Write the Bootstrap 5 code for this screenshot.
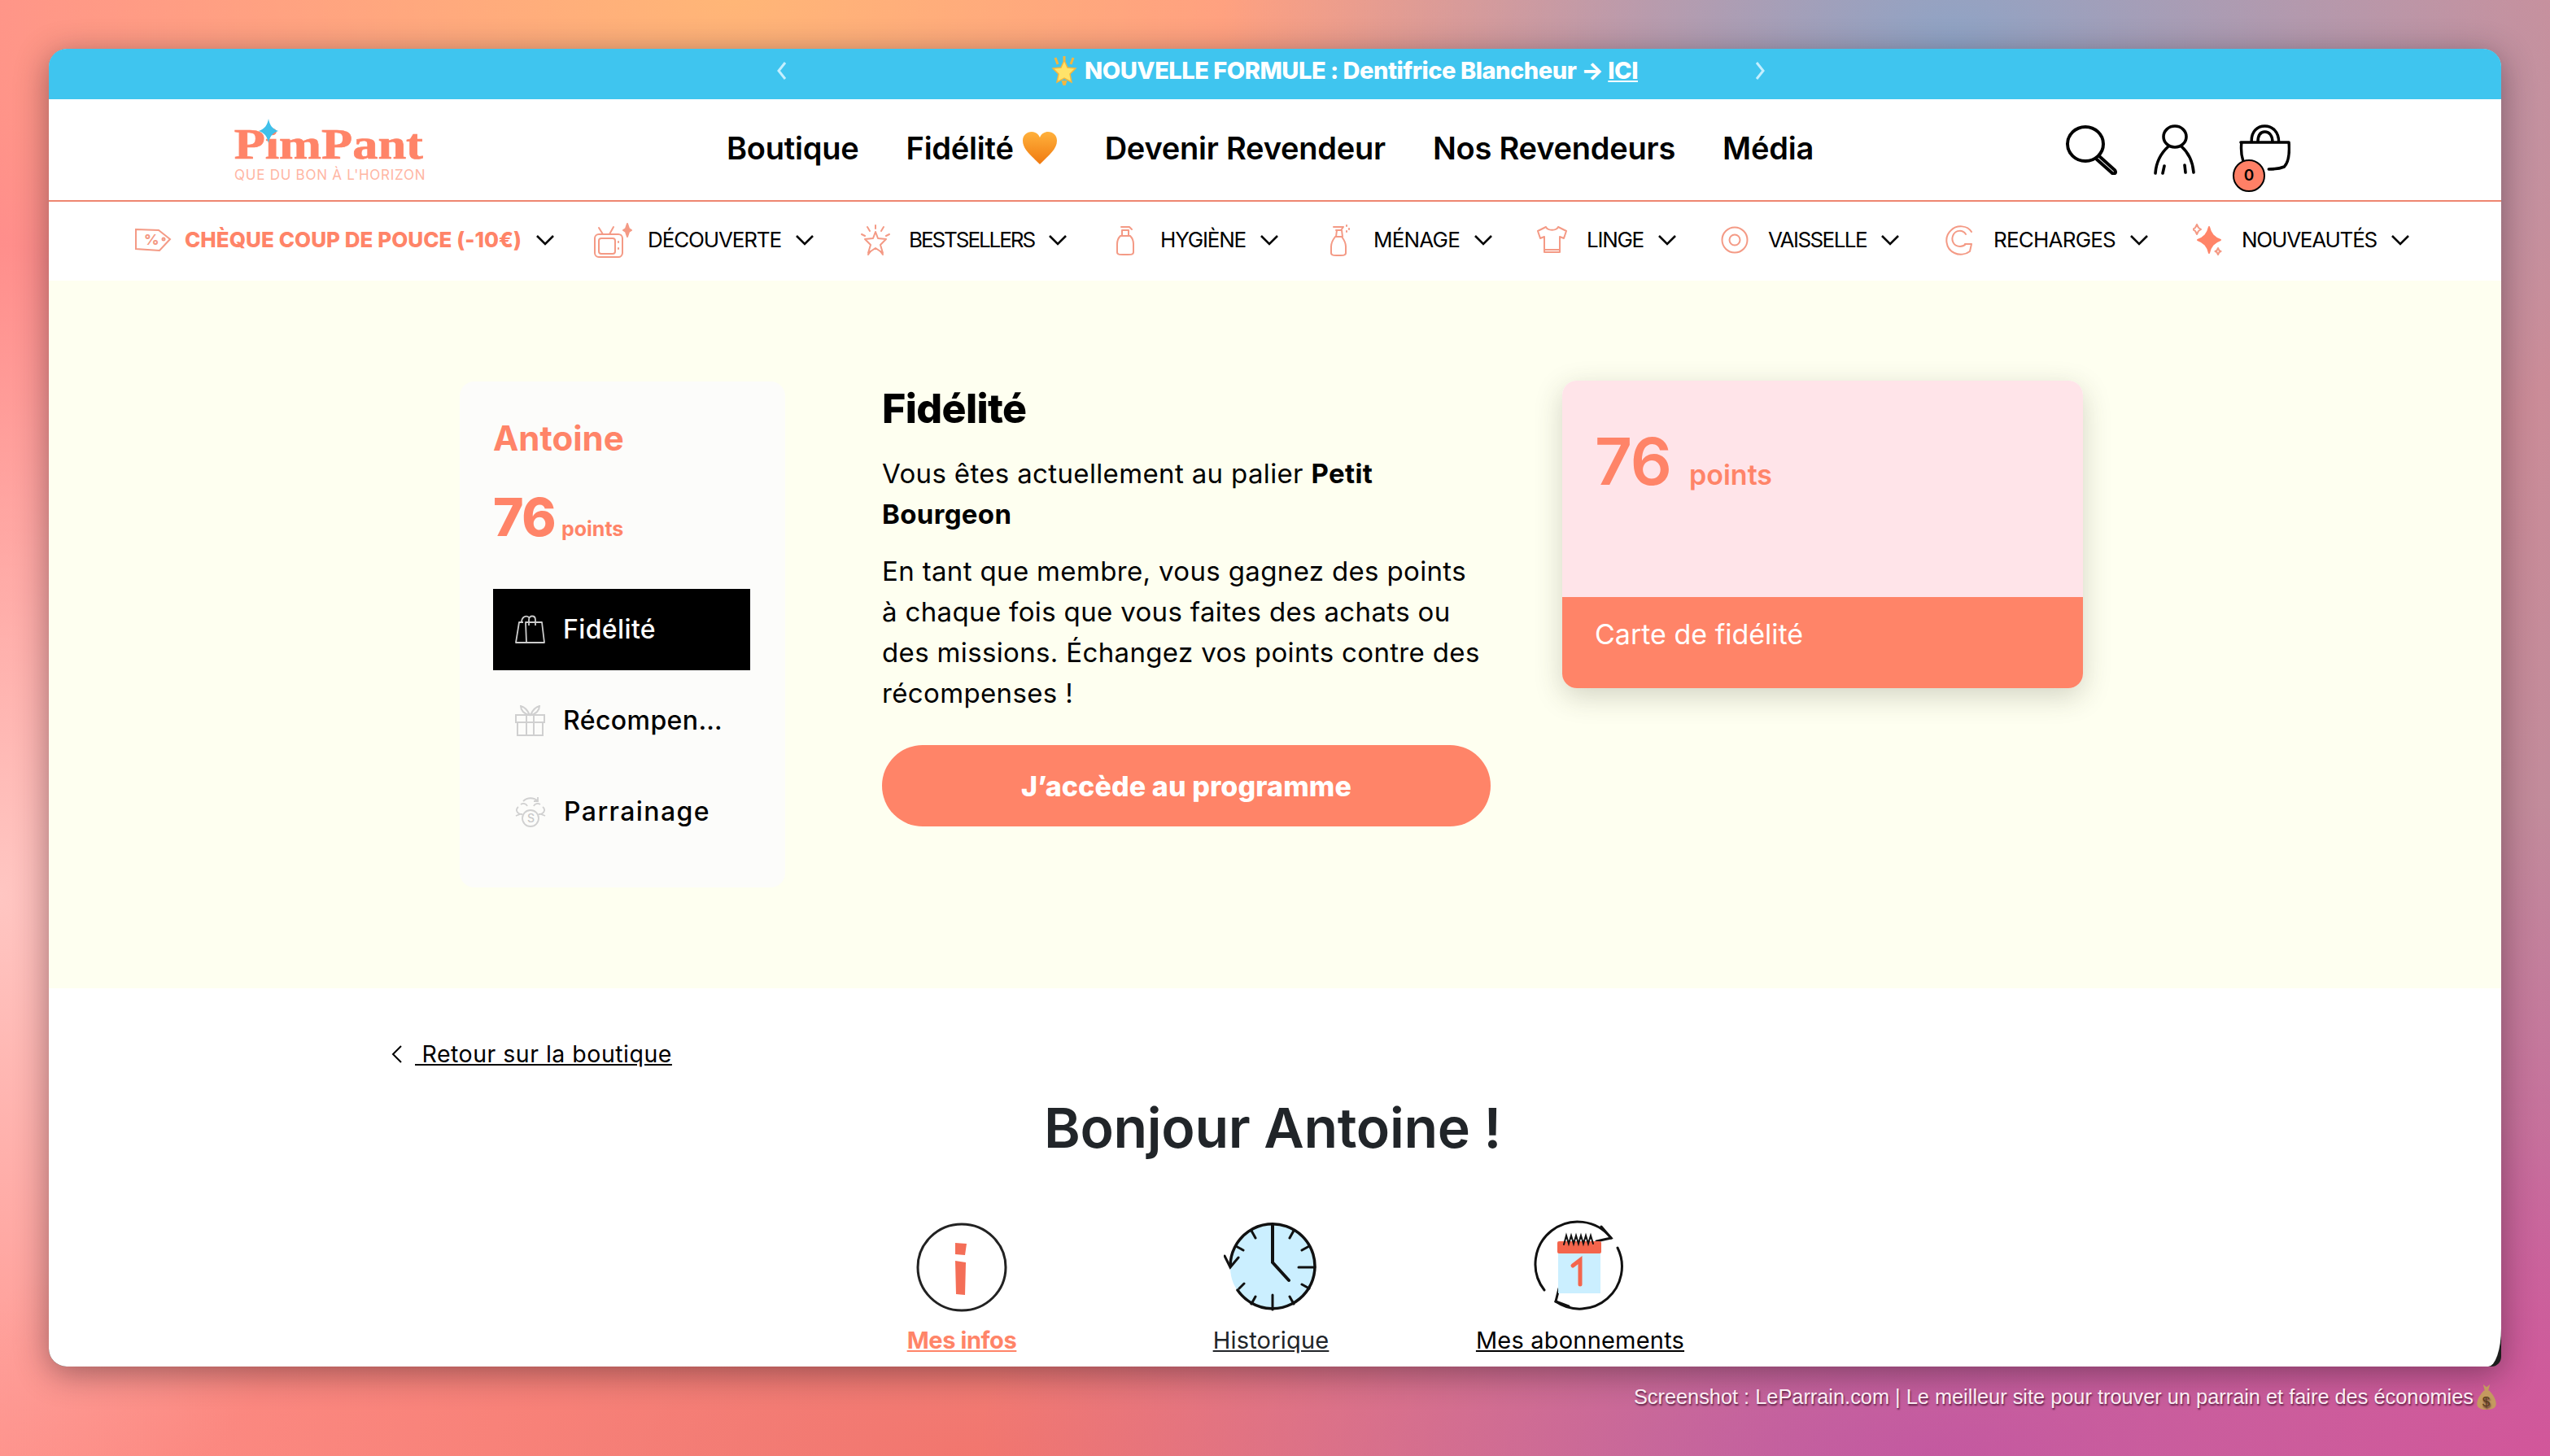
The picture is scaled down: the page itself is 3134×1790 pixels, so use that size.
<!DOCTYPE html>
<html lang="fr">
<head>
  <title>Pimpant - Fidélité</title>
  <meta charset="UTF-8">
  <link href="https://cdn.jsdelivr.net/npm/bootstrap@5.3.0/dist/css/bootstrap.min.css" rel="stylesheet">
  <script src="https://cdn.jsdelivr.net/npm/bootstrap@5.3.0/dist/js/bootstrap.bundle.min.js"></script>
  <style>
    html, body { height: 1790px; overflow: hidden; }
    body {
      font-family: Inter, "Noto Sans", sans-serif;
      color: #000;
      padding: 60px 58px 0 60px;
      background:
        radial-gradient(900px 700px at 2400px 60px, #8ea4c6 0%, rgba(142,164,198,0) 100%),
        radial-gradient(1100px 800px at 3134px 1790px, #d2569a 0%, rgba(210,86,154,0) 100%),
        radial-gradient(1200px 500px at 2400px 1790px, #bd5aa3 0%, rgba(189,90,163,0) 100%),
        radial-gradient(1300px 500px at 1200px 1790px, #f2766e 0%, rgba(242,118,110,0) 100%),
        radial-gradient(500px 800px at 0 1100px, #ffc6c2 0%, rgba(255,198,194,0) 100%),
        radial-gradient(1100px 500px at 900px 0, #ffb677 0%, rgba(255,182,119,0) 100%),
        linear-gradient(120deg, #ff8e8c 0%, #ff9086 40%, #b48aa0 100%);
    }
    .app-window {
      width: 3014px; height: 1620px; background: #1c1c1c;
      border-radius: 22px 22px 12px 22px; overflow: hidden;
      box-shadow: 0 8px 40px rgba(40,20,30,.45);
    }
    .app-pane { height: 100%; background: #fff; border-bottom-right-radius: 16px 47px; overflow: hidden; }
    .promo-bar { height: 62px; background: #3fc5ef; color: #fff; padding: 0 10px 8px 0; }
    .promo-text { width: 1188px; padding-left: 180px; font-size: 29px; font-weight: 800; }
    .promo-text a { color: #fff; }
    .main-head { height: 126px; border-bottom: 2px solid #ee8670; padding-left: 228px; padding-bottom: 4px; }
    .logo-box { width: 232px; margin-right: 373px; margin-top: 19px; position: relative; text-align: center; }
    .logo-name { font-family: "Liberation Serif", serif; font-weight: 700; font-size: 52px; line-height: 40px; color: #ff8468; white-space: nowrap; -webkit-text-stroke: .7px #ff8468; }
    .logo-name span { transform: scaleX(1.2); }
    .logo-tag { font-size: 17px; line-height: 20px; color: #ffb6a4; letter-spacing: .75px; white-space: nowrap; margin-top: 7px; }
    .logo-star { position: absolute; left: 30px; top: -12px; }
    .main-links { gap: 58px; width: 1645px; }
    .main-links .nav-link { padding: 0; color: #000; font-size: 38px; font-weight: 600; letter-spacing: -.22px; }
    .heart-link { gap: 10px; }
    .head-icons { gap: 42px; padding-top: 4px; }
    .cart-wrap { position: relative; margin-left: 10px; }
    .cart-count {
      position: absolute; left: -8px; top: 43px; width: 40px; height: 40px; border-radius: 50%;
      background: #ff8066; border: 2px solid #000; font-size: 19px; font-weight: 600;
      display: flex; align-items: center; justify-content: center;
    }
    .sub-nav { height: 97px; padding: 0 0 4px 105px; font-size: 26px; }
    .sub-item { white-space: nowrap; color: #000; text-decoration: none; }
    .sub-promo { color: #ff8468; font-weight: 800; }
    .hero { height: 870px; background: #fefff0; padding: 124px 0 0 505px; }
    .side-panel { width: 400px; height: 622px; background: #fcfcfa; border-radius: 18px; padding: 41px; }
    .side-name { font-size: 42px; font-weight: 700; color: #ff8468; line-height: 58px; margin-bottom: 32px; }
    .side-points { font-size: 64px; font-weight: 800; color: #ff8468; line-height: 72px; margin-bottom: 38px; letter-spacing: -1.5px; gap: 8px; }
    .side-points span { font-size: 25px; font-weight: 700; letter-spacing: 0; }
    .side-menu { width: 316px; gap: 12px; }
    .side-menu .list-group-item {
      height: 100px; border: 0; border-radius: 0; background: transparent; color: #000;
      font-size: 32px; font-weight: 500; padding: 0 0 0 27px; gap: 22px;
    }
    .side-menu .list-group-item.active { background: #000; color: #fff; }
    .intro-col { width: 748px; margin: -3px 88px 0 119px; }
    .intro-col h2 { font-size: 50px; font-weight: 800; line-height: 72px; margin-bottom: 19px; letter-spacing: -.6px; }
    .intro-col p { font-size: 33px; line-height: 50px; margin-bottom: 20px; letter-spacing: .35px; white-space: nowrap; }
    .btn-program {
      background: #ff8468; color: #fff; height: 100px; margin-top: 39px; font-size: 34px; font-weight: 800; letter-spacing: .1px;
      border: 0;
    }
    .points-card {
      width: 640px; height: 378px; border: 0; border-radius: 18px; overflow: hidden;
      box-shadow: 0 10px 34px rgba(60,60,40,.22); margin-top: -1px;
    }
    .points-card .card-body { background: #ffe4e9; color: #ff8468; padding: 54px 40px 0; height: 266px; flex: none; }
    .points-big { font-size: 80px; font-weight: 600; line-height: 90px; letter-spacing: -1px; gap: 22px; }
    .points-big span { font-size: 34px; letter-spacing: 0; }
    .points-card .card-footer { background: #ff8468; color: #fff; border: 0; border-radius: 0; height: 112px; padding: 0 40px 22px; font-size: 34px; }
    .back-link { padding: 68px 0 0 420px; height: 94px; font-size: 28.5px; line-height: 34px; letter-spacing: .5px; }
    .back-link a { color: #000; margin-left: 14px; }
    .hello { font-size: 68px; font-weight: 600; color: #212529; text-align: center; line-height: 80px; margin: 37px 0 74px; padding-right: 6px; letter-spacing: -.3px; }
    .tile-row { width: 1140px; margin-left: 932px; }
    .tile { width: 380px; text-align: center; font-size: 29px; line-height: 36px; letter-spacing: .2px; }
    .tile svg { display: block; margin: 0 auto 14px; }
    .tile a { color: #000; }
    .tile a.muted-link { color: #212529; }
    .tile a.current { color: #ff8468; font-weight: 700; letter-spacing: -.4px; }
    .credit {
      margin-top: 21px; padding-right: 8px; font-family: "Liberation Sans", Arial, sans-serif; font-size: 25.35px;
      color: #fbeef4; text-shadow: 1px 2px 2px rgba(60,10,40,.75); line-height: 28px;
    }
  </style>
</head>
<body>

<div class="app-window">
 <div class="app-pane d-flex flex-column">

  <div class="promo-bar d-flex align-items-center justify-content-center">
    <svg width="14" height="24" viewBox="0 0 14 24"><path d="M11 2 3 12l8 10" fill="none" stroke="#c4efff" stroke-width="3"/></svg>
    <div class="promo-text d-flex align-items-center justify-content-center gap-2">
      <svg width="34" height="36" viewBox="0 0 34 36">
        <path d="M6 2l3 8M28 2l-3 8M17 0v6M15 30l2 6 2-6" stroke="#f3b640" stroke-width="3" fill="none"/>
        <path d="M17 5l4 9 10 1-7 7 2 10-9-5-9 5 2-10-7-7 10-1z" fill="#ffe36a" stroke="#f4b63f" stroke-width="1.5"/>
      </svg>
      <span data-fit="680">NOUVELLE FORMULE : Dentifrice Blancheur → <a href="#">ICI</a></span>
    </div>
    <svg width="14" height="24" viewBox="0 0 14 24"><path d="M3 2l8 10-8 10" fill="none" stroke="#c4efff" stroke-width="3"/></svg>
  </div>

  <header class="main-head d-flex align-items-center">
    <div class="logo-box">
      <div class="logo-name"><span class="d-inline-block">PimPant</span></div>
      <svg class="logo-star" width="24" height="30" viewBox="0 0 30 36" preserveAspectRatio="none"><path d="M15 0c2 10 6 15 15 18-9 3-13 8-15 18-2-10-6-15-15-18 9-3 13-8 15-18z" fill="#3fc0ea"/></svg>
      <div class="logo-tag">QUE DU BON À L'HORIZON</div>
    </div>
    <nav class="nav main-links">
      <a class="nav-link" href="#">Boutique</a>
      <a class="nav-link heart-link d-flex align-items-center" href="#">Fidélité
        <svg width="44" height="42" viewBox="0 0 44 42"><defs><linearGradient id="heartFill" x1="0" y1="0" x2="0" y2="1"><stop offset="0" stop-color="#ffb13c"/><stop offset="1" stop-color="#f07a10"/></linearGradient></defs><path d="M22 41C10 29 1 22 1 12 1 5 6 1 12 1c4 0 8 2 10 7 2-5 6-7 10-7 6 0 11 4 11 11 0 10-9 17-21 29z" fill="url(#heartFill)"/></svg>
      </a>
      <a class="nav-link" href="#">Devenir Revendeur</a>
      <a class="nav-link" href="#">Nos Revendeurs</a>
      <a class="nav-link" href="#">Média</a>
    </nav>
    <div class="head-icons d-flex align-items-center">
      <svg width="66" height="62" viewBox="0 0 66 62" fill="none" stroke="#000" stroke-width="4" stroke-linecap="round"><ellipse cx="25" cy="24" rx="22" ry="21"/><path d="M42 39l19 17c3 4-1 6-4 3L39 43"/></svg>
      <svg width="54" height="62" viewBox="0 0 54 62" fill="none" stroke="#000" stroke-width="3.6" stroke-linecap="round"><ellipse cx="27" cy="15" rx="14" ry="13"/><path d="M19 27C9 36 4 46 3 60M35 27c9 8 14 20 15 32M12 60l2-9M40 59l-1-9"/></svg>
      <div class="cart-wrap">
        <svg width="63" height="62" viewBox="0 0 66 62" preserveAspectRatio="none" fill="none" stroke="#000" stroke-width="3.6" stroke-linecap="round"><path d="M2 22h62M3 22c-1 10 0 24 8 32M64 22c1 12 0 24-6 30-5 2-12 3-20 3M16 22C15 8 24 2 33 2s18 6 18 20M24 22c0-8 3-13 9-13s10 5 10 13"/></svg>
        <div class="cart-count">0</div>
      </div>
    </div>
  </header>

  <nav class="sub-nav d-flex align-items-center" id="subNav">
    <a class="sub-item sub-promo d-flex align-items-center" href="#">
      <svg width="46" height="30" viewBox="0 0 46 30" fill="none" stroke="#f49a85" stroke-width="2"><path d="M2 2l28 1 14 11-13 14-29-2z"/><text x="12" y="21" font-size="18" fill="#f49a85" stroke="none">%</text><circle cx="36" cy="14" r="1.5"/></svg>
      <span class="ms-3" data-fit="414">CHÈQUE COUP DE POUCE (-10€)</span>
    </a>
  </nav>

  <section class="hero d-flex align-items-start">
    <aside class="side-panel">
      <div class="side-name">Antoine</div>
      <div class="side-points d-flex align-items-baseline"><div>76</div><span>points</span></div>
      <div class="list-group side-menu">
        <a href="#" class="list-group-item active d-flex align-items-center">
          <svg width="37" height="36" viewBox="0 0 37 36" fill="none" stroke="#ccc" stroke-width="1.8" stroke-linejoin="round"><path d="M10 9H5L1 34h13M13 9h20l3 25H14zM17 13V6c0-6 8-6 8 0v7M8 9c0-7 6-9 9-6"/></svg>
          <span data-fit="114">Fidélité</span>
        </a>
        <a href="#" class="list-group-item d-flex align-items-center">
          <svg width="37" height="38" viewBox="0 0 37 38" fill="none" stroke="#d0d0d0" stroke-width="2"><path d="M1 12h35v9H1zM3 21h31v16H3zM14 12v25M23 12v25M18 12C15 5 11 2 7 1c0 5 4 10 11 11zM19 12c3-7 7-10 11-11 0 5-4 10-11 11z"/></svg>
          <span data-fit="196">Récompen…</span>
        </a>
        <a href="#" class="list-group-item d-flex align-items-center">
          <svg width="38" height="38" viewBox="0 0 38 38" fill="none" stroke="#d0d0d0" stroke-width="1.8"><circle cx="19" cy="27" r="10"/><text x="15" y="32" font-size="14" fill="#c8c8c8" stroke="none">S</text><path d="M10 6c5-5 13-5 18 0M28 1v5h-5M9 22c-7 0-9-6-5-9M29 22c7 0 9-6 5-9M7 10c3-2 7-1 8 2M31 10c-3-2-7-1-8 2M1 24l5-2M37 24l-5-2"/></svg>
          <span data-fit="180">Parrainage</span>
        </a>
      </div>
    </aside>

    <div class="intro-col">
      <h2>Fidélité</h2>
      <p>Vous êtes actuellement au palier <strong>Petit<br>Bourgeon</strong></p>
      <p>En tant que membre, vous gagnez des points<br>à chaque fois que vous faites des achats ou<br>des missions. Échangez vos points contre des<br>récompenses !</p>
      <a href="#" class="btn btn-program rounded-pill w-100 d-flex align-items-center justify-content-center">J’accède au programme</a>
    </div>

    <div class="card points-card">
      <div class="card-body">
        <div class="points-big d-flex align-items-baseline"><div>76</div><span>points</span></div>
      </div>
      <div class="card-footer d-flex align-items-center">Carte de fidélité</div>
    </div>
  </section>

  <section>
    <div class="back-link d-flex align-items-center">
      <svg width="16" height="24" viewBox="0 0 16 24"><path d="M13 2 3 12l10 10" fill="none" stroke="#000" stroke-width="2"/></svg>
      <a href="#">&nbsp;Retour sur la boutique</a>
    </div>
    <h1 class="hello">Bonjour Antoine !</h1>
    <div class="tile-row d-flex">
      <div class="tile">
        <svg width="116" height="116" viewBox="0 0 116 116">
          <ellipse cx="58" cy="58" rx="54" ry="53" fill="none" stroke="#222" stroke-width="3"/>
          <path d="M50 28l14 1-2 14-12-1zM50 50l13 2-1 40-11-1z" fill="#f46e57"/>
        </svg>
        <a class="current" href="#">Mes infos</a>
      </div>
      <div class="tile">
        <svg width="116" height="116" viewBox="0 0 116 116" fill="none" stroke="#111" stroke-linecap="round">
          <circle cx="60" cy="58" r="52" fill="#cbefff" stroke="none"/>
          <path d="M17 86A52 52 0 1 0 8 56" stroke-width="3.500"/>
          <path d="M1 44l7 14 10-12" stroke-width="3"/>
          <path d="M60 6v46l20 22" stroke-width="4"/>
          <path d="M92 58h20M60 92v18M86 13l-5 9M105 32l-9 5M105 84l-9-5M86 103l-5-9M34 103l5-9M19 84l6-6M15 32l9 5M34 13l5 9" stroke-width="3"/>
        </svg>
        <a class="muted-link" href="#">Historique</a>
      </div>
      <div class="tile">
        <svg width="116" height="116" viewBox="0 0 116 116" fill="none" stroke="#111" stroke-linecap="round">
          <path d="M14 86A52 52 0 0 1 96 22M104 34A52 52 0 0 1 28 100" stroke-width="3"/>
          <path d="M84 8l12 14-18 4M32 84l-4 16 16 6" stroke-width="3"/>
          <rect x="31" y="34" width="52" height="56" fill="#cbefff" stroke="none"/>
          <rect x="30" y="26" width="54" height="15" rx="2" fill="#f4654c" stroke="none"/>
          <path d="M38 30l3-11 3 10 3-10 3 10 3-10 3 10 3-10 3 10 3-10 3 10 3-10 3 10" stroke-width="2"/>
          <path d="M49 56l9-7v30" stroke="#f4654c" stroke-width="5"/>
        </svg>
        <a href="#">Mes abonnements</a>
      </div>
    </div>
  </section>

 </div>
</div>

<div class="credit d-flex justify-content-end align-items-center">
  <span>Screenshot : LeParrain.com | Le meilleur site pour trouver un parrain et faire des économies</span>
  <svg class="ms-1" width="24" height="32" viewBox="0 0 22 30"><path d="M7 1l4 3 4-3-2 7H9zM8 8h6c4 4 8 10 8 15 0 5-4 7-11 7S0 28 0 23C0 18 4 12 8 8z" fill="#c49a5f"/><text x="6" y="26" font-size="16" fill="#5a3d1c" font-family="Liberation Sans">$</text></svg>
</div>

<script>
  // sub navigation entries: label, label width, icon markup
  const stroke = 'fill="none" stroke="#f49a85" stroke-width="2" stroke-linecap="round" stroke-linejoin="round"';
  const items = [
    { label: "DÉCOUVERTE", width: 164, gap: 19, before: 46, w: 48, h: 46,
      icon: `<rect x="2" y="16" width="34" height="28" rx="5"/><rect x="7" y="21" width="20" height="19" rx="3"/><path d="M12 16 7 8M20 16l5-9M31 25v1M31 33v1"/><path d="M42 3l2 6 3 2-3 2-2 6-2-6-3-2 3-2z" fill="#f49a85"/>` },
    { label: "BESTSELLERS", width: 154, gap: 22, before: 55, w: 38, h: 38,
      icon: `<path d="M19 9l3 8 10 1-7 7 3 10-9-6-9 6 3-10-7-7 10-1z"/><path d="M19 1v4M9 3l3 5M29 3l-3 5M2 12l4 2M36 12l-4 2M10 37l3-4M28 37l-3-4"/>` },
    { label: "HYGIÈNE", width: 105, gap: 31, before: 58, w: 24, h: 38,
      icon: `<path d="M6 14c-3 3-4 6-4 10v10c0 3 2 3 10 3s10 0 10-3V24c0-4-1-7-4-10zM8 14V7h8v7M7 3h10l3 3"/>` },
    { label: "MÉNAGE", width: 106, gap: 28, before: 61, w: 26, h: 40,
      icon: `<path d="M7 16c-3 4-5 8-5 12v8c0 3 3 3 9 3s9 0 9-3v-8c0-4-2-8-5-12zM8 16l1-8h6l1 8M5 4h12l-3 4H8M21 2v1M24 6v1M21 9v1"/>` },
    { label: "LINGE", width: 70, gap: 24, before: 52, w: 38, h: 36,
      icon: `<path d="M12 2 2 7l3 9 5-2v19h19V14l5 2 3-9-10-5c-2 5-13 5-15 0zM10 30h19"/>` },
    { label: "VAISSELLE", width: 121, gap: 24, before: 53, w: 34, h: 34,
      icon: `<circle cx="17" cy="17" r="15.5"/><circle cx="17" cy="17" r="6.5"/>` },
    { label: "RECHARGES", width: 150, gap: 24, before: 54, w: 36, h: 38,
      icon: `<path d="M33 9C28 1 15 0 8 7-1 15 1 30 12 35c6 3 14 2 19-2l2-9h-8"/><path d="M26 12C22 6 14 7 11 12c-4 7 0 15 8 15 3 0 5-1 7-3"/>` },
    { label: "NOUVEAUTÉS", width: 166, gap: 22, before: 53, w: 38, h: 40,
      icon: `<path d="M20 4c2 9 6 13 14 16-8 3-12 7-14 16-2-9-6-13-14-16 8-3 12-7 14-16z" fill="#ff8468" stroke="#ff8468"/><path d="M5 1l2 4 3 2-3 2-2 4-2-4-3-2 3-2zM31 30l1.500 3 2 1-2 1-1.500 3-1.500-3-2-1 2-1z"/>` }
  ];
  const chevron = `<svg width="26" height="16" viewBox="0 0 26 16"><path d="M3 3l10 10L23 3" fill="none" stroke="#000" stroke-width="2.600"/></svg>`;
  const subNav = document.getElementById("subNav");
  subNav.firstElementChild.insertAdjacentHTML("beforeend", `<span class="ms-3 d-flex">${chevron}</span>`);
  items.forEach(item => {
    subNav.insertAdjacentHTML("beforeend", `
      <a class="sub-item d-flex align-items-center" href="#" style="margin-left:${item.before}px">
        <svg width="${item.w}" height="${item.h}" viewBox="0 0 ${item.w} ${item.h}" ${stroke}>${item.icon}</svg>
        <span data-fit="${item.width}" style="margin-left:${item.gap}px">${item.label}</span>
        <span class="ms-3 d-flex">${chevron}</span>
      </a>`);
  });

  // labels are set to the width they have in the design
  document.querySelectorAll("[data-fit]").forEach(el => {
    const diff = Number(el.dataset.fit) - el.getBoundingClientRect().width;
    el.style.letterSpacing = (diff / el.textContent.length) + "px";
  });
</script>

</body>
</html>
